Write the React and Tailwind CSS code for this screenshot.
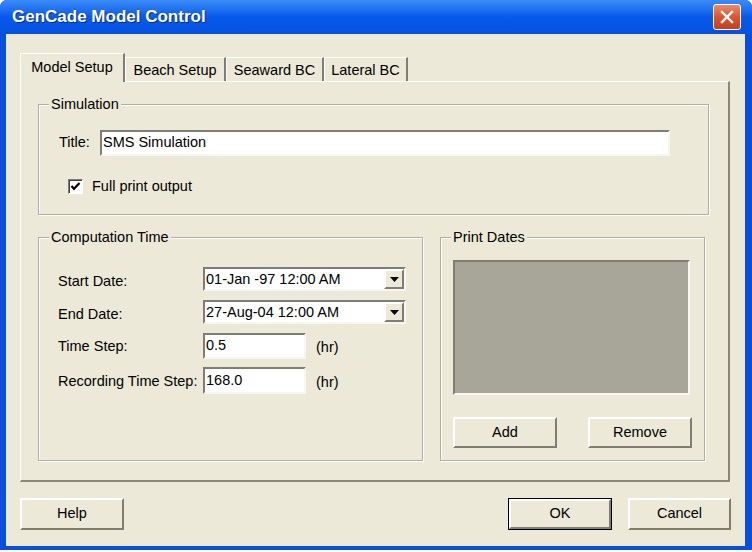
import React from "react";

const font = { fontFamily: '"Liberation Sans", Arial, sans-serif' };

function Sunken({ className = "", children }) {
  return (
    <div
      className={
        "border-2 border-t-[#807e72] border-l-[#807e72] border-r-[#f7f6f1] border-b-[#f7f6f1] " +
        className
      }
    >
      {children}
    </div>
  );
}

function Button({ className = "", children, isDefault = false }) {
  const inner = (
    <div className="flex h-full w-full items-center justify-center border-2 border-t-white border-l-white border-r-[#807e72] border-b-[#807e72] bg-[#ece9d8] text-[14.5px] text-black">
      {children}
    </div>
  );
  if (isDefault) {
    return <div className={"border border-black " + className}>{inner}</div>;
  }
  return <div className={className}>{inner}</div>;
}

function GroupBox({ label, className = "", children }) {
  return (
    <div
      className={
        "relative border border-[#b1afa2] shadow-[inset_1px_1px_0_#ffffff,1px_1px_0_#ffffff] " +
        className
      }
    >
      <div className="absolute left-[10px] top-[-9px] bg-[#ece9d8] px-[2px] text-[14.5px] leading-[16px] text-black">
        {label}
      </div>
      {children}
    </div>
  );
}

function Combo({ value }) {
  return (
    <Sunken className="flex h-[24px] w-[203px] items-center bg-white">
      <div className="flex-1 pl-[1px] text-[14.5px] leading-[16px] text-black">{value}</div>
      <div className="flex h-[20px] w-[20px] items-center justify-center border-2 border-t-white border-l-white border-r-[#807e72] border-b-[#807e72] bg-[#ece9d8]">
        <svg width="9" height="5" viewBox="0 0 9 5">
          <path d="M0 0 H9 L4.5 5 Z" fill="#000" />
        </svg>
      </div>
    </Sunken>
  );
}

function Tab({ label, selected, className = "" }) {
  if (selected) {
    return (
      <div
        className={
          "relative z-10 -mb-px flex h-[29px] items-center justify-center border-l border-t border-white border-r-2 border-r-[#807e72] bg-[#ece9d8] text-[14.5px] " +
          className
        }
      >
        {label}
      </div>
    );
  }
  return (
    <div
      className={
        "flex h-[24px] items-center justify-center border-l border-t border-white border-r-2 border-r-[#807e72] bg-[#ece9d8] pt-[2px] text-[14.5px] " +
        className
      }
    >
      {label}
    </div>
  );
}

export default function App() {
  return (
    <div className="h-[552px] w-[752px] overflow-hidden bg-white text-black" style={font}>
      <div className="flex h-[550px] w-[752px] flex-col rounded-t-[7px] bg-[#0a4fdc]">
        {/* Title bar */}
        <div className="flex h-[34px] items-center justify-between rounded-t-[7px] bg-gradient-to-b from-[#3b8cf8] via-[#0858ea] to-[#0552e0] pl-[12px] pr-[11px]">
          <div className="text-[17px] font-bold text-white [text-shadow:1px_1px_0_#0a2a8a]">
            GenCade Model Control
          </div>
          <div className="flex h-[26px] w-[28px] items-center justify-center rounded-[3px] border border-white bg-gradient-to-b from-[#e88a68] via-[#dc5430] to-[#c6401c]">
            <svg width="14" height="14" viewBox="0 0 14 14">
              <path d="M2 2 L12 12 M12 2 L2 12" stroke="#fff" strokeWidth="2.4" strokeLinecap="square" />
            </svg>
          </div>
        </div>

        {/* Body */}
        <div className="mb-[4px] ml-[6px] mr-[7px] flex flex-1 flex-col bg-[#ece9d8] pl-[14px] pt-[19px]">
          {/* Tabs */}
          <div className="flex h-[28px] items-end">
            <Tab label="Model Setup" selected className="w-[105px]" />
            <Tab label="Beach Setup" className="w-[101px]" />
            <Tab label="Seaward BC" className="w-[98px]" />
            <Tab label="Lateral BC" className="w-[84px]" />
          </div>
          {/* Panel */}
          <div className="flex h-[401px] w-[710px] flex-col border-l border-t border-white border-b-2 border-r-2 border-b-[#8a887b] border-r-[#8a887b] pl-[17px] pt-[22px]">
            <GroupBox label="Simulation" className="h-[111px] w-[671px]">
              <div className="flex items-center pl-[20px] pt-[25px]">
                <div className="w-[41px] text-[14.5px]">Title:</div>
                <Sunken className="flex h-[26px] w-[570px] items-center bg-white pl-[1px] text-[14.5px]">
                  SMS Simulation
                </Sunken>
              </div>
              <div className="flex items-center pl-[29px] pt-[20px]">
                <div className="flex h-[15px] w-[15px] items-center justify-center border border-t-[#807e72] border-l-[#807e72] border-r-white border-b-white bg-white shadow-[inset_1px_1px_0_#404040]">
                  <svg width="11" height="11" viewBox="0 0 11 11">
                    <path d="M1.5 5 L4 7.8 L9.5 2" stroke="#000" strokeWidth="2.2" fill="none" />
                  </svg>
                </div>
                <div className="pl-[9px] text-[14.5px]">Full print output</div>
              </div>
            </GroupBox>

            <div className="mt-[22px] flex gap-[17px]">
              <GroupBox label="Computation Time" className="h-[224px] w-[385px]">
                <div className="flex flex-col pl-[19px] pt-[29px]">
                  <div className="flex h-[24px] items-center">
                    <div className="w-[145px] pt-[6px] text-[14.5px]">Start Date:</div>
                    <Combo value="01-Jan -97 12:00 AM" />
                  </div>
                  <div className="mt-[9px] flex h-[24px] items-center">
                    <div className="w-[145px] pt-[6px] text-[14.5px]">End Date:</div>
                    <Combo value="27-Aug-04 12:00 AM" />
                  </div>
                  <div className="mt-[9px] flex h-[26px] items-center">
                    <div className="w-[145px] pt-[2px] text-[14.5px]">Time Step:</div>
                    <Sunken className="flex h-[26px] w-[103px] items-center bg-white pl-[1px] text-[14.5px]">0.5</Sunken>
                    <div className="pl-[10px] pt-[4px] text-[14.5px]">(hr)</div>
                  </div>
                  <div className="mt-[8px] flex h-[27px] items-center">
                    <div className="w-[145px] pt-[2px] text-[14.5px]">Recording Time Step:</div>
                    <Sunken className="flex h-[27px] w-[103px] items-center bg-white pl-[1px] text-[14.5px]">168.0</Sunken>
                    <div className="pl-[10px] pt-[4px] text-[14.5px]">(hr)</div>
                  </div>
                </div>
              </GroupBox>

              <GroupBox label="Print Dates" className="h-[224px] w-[265px]">
                <div className="flex flex-col pl-[12px] pt-[22px]">
                  <Sunken className="h-[135px] w-[237px] bg-[#a8a599]" />
                  <div className="mt-[22px] flex gap-[31px]">
                    <Button className="h-[31px] w-[104px]">Add</Button>
                    <Button className="h-[31px] w-[104px]">Remove</Button>
                  </div>
                </div>
              </GroupBox>
            </div>
          </div>

          {/* Bottom buttons */}
          <div className="mt-[16px] flex">
            <Button className="h-[32px] w-[104px]">Help</Button>
            <div className="ml-[384px] flex gap-[16px]">
              <Button isDefault className="h-[32px] w-[104px]">OK</Button>
              <Button className="h-[32px] w-[103px]">Cancel</Button>
            </div>
          </div>
        </div>
      </div>
    </div>
  );
}
